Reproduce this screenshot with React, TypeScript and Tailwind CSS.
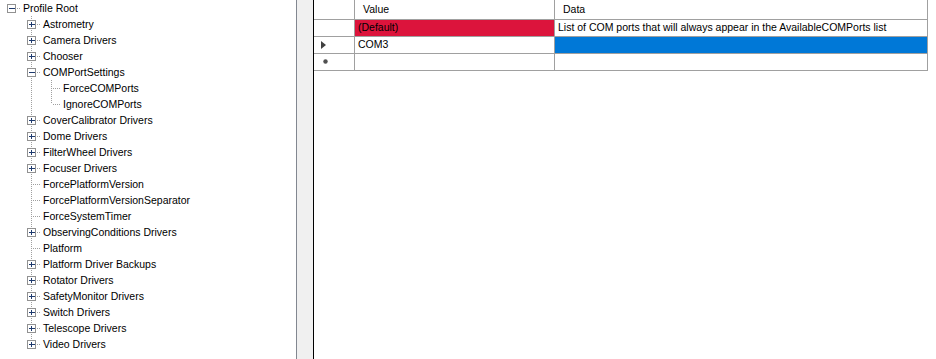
type TreeNode = {
  label: string;
  children?: TreeNode[];
  expanded?: boolean;
};

const tree: TreeNode = {
  label: "Profile Root",
  expanded: true,
  children: [
    { label: "Astrometry", children: [] },
    { label: "Camera Drivers", children: [] },
    { label: "Chooser", children: [] },
    {
      label: "COMPortSettings",
      expanded: true,
      children: [{ label: "ForceCOMPorts" }, { label: "IgnoreCOMPorts" }],
    },
    { label: "CoverCalibrator Drivers", children: [] },
    { label: "Dome Drivers", children: [] },
    { label: "FilterWheel Drivers", children: [] },
    { label: "Focuser Drivers", children: [] },
    { label: "ForcePlatformVersion" },
    { label: "ForcePlatformVersionSeparator" },
    { label: "ForceSystemTimer" },
    { label: "ObservingConditions Drivers", children: [] },
    { label: "Platform" },
    { label: "Platform Driver Backups", children: [] },
    { label: "Rotator Drivers", children: [] },
    { label: "SafetyMonitor Drivers", children: [] },
    { label: "Switch Drivers", children: [] },
    { label: "Telescope Drivers", children: [] },
    { label: "Video Drivers", children: [] },
  ],
};

type Row = {
  label: string;
  level: number;
  hasChildren: boolean;
  expanded: boolean;
  isLast: boolean;
  ancestorsMore: boolean[];
};

function flatten(node: TreeNode, level: number, isLast: boolean, ancestorsMore: boolean[], out: Row[]) {
  const hasChildren = node.children !== undefined;
  out.push({ label: node.label, level, hasChildren, expanded: !!node.expanded, isLast, ancestorsMore });
  if (node.expanded && node.children) {
    node.children.forEach((c, i) =>
      flatten(c, level + 1, i === node.children!.length - 1, [...ancestorsMore, !isLast], out)
    );
  }
}

const rows: Row[] = [];
flatten(tree, 0, true, [], rows);

const LINE = "#a0a0a0";

function Connector({ row }: { row: Row }) {
  const w = 20 * row.level + 21;
  const cx = 11 + 20 * row.level + 0.5;
  return (
    <svg width={w} height={16} className="shrink-0" shapeRendering="crispEdges">
      {row.ancestorsMore.map((more, a) =>
        a >= 1 && more ? (
          <line key={a} x1={11 + 20 * a + 0.5} y1={0} x2={11 + 20 * a + 0.5} y2={16} stroke={LINE} strokeDasharray="1 1" />
        ) : null
      )}
      {row.level >= 1 && (
        <line x1={cx} y1={0} x2={cx} y2={row.isLast ? 8 : 16} stroke={LINE} strokeDasharray="1 1" />
      )}
      <line x1={cx + 1} y1={8.5} x2={w} y2={8.5} stroke={LINE} strokeDasharray="1 1" />
      {row.hasChildren && (
        <g>
          <rect x={cx - 4} y={4.5} width={8} height={8} fill="#ffffff" stroke="#919191" />
          <line x1={cx - 2.5} y1={8.5} x2={cx + 3} y2={8.5} stroke="#1e3a6e" />
          {!row.expanded && <line x1={cx} y1={6} x2={cx} y2={11} stroke="#1e3a6e" />}
        </g>
      )}
    </svg>
  );
}

function TreePanel() {
  return (
    <div className="w-[297px] h-full bg-white border-r border-[#828790] shrink-0 overflow-hidden">
      {rows.map((r) => (
        <div key={r.label} className="flex items-center h-[16px]">
          <Connector row={r} />
          <span className="ml-[2px] text-black whitespace-nowrap leading-none">{r.label}</span>
        </div>
      ))}
    </div>
  );
}

function RowHeaderGlyph({ kind }: { kind: "current" | "new" | "none" }) {
  if (kind === "current")
    return (
      <svg width={6} height={8} className="ml-[7px]">
        <path d="M0 0 L5 4 L0 8 Z" fill="#404040" />
      </svg>
    );
  if (kind === "new")
    return (
      <svg width={6} height={6} className="ml-[9px]">
        <circle cx={2.5} cy={2.5} r={2.2} fill="#505050" />
      </svg>
    );
  return null;
}

function DataGrid() {
  const cell = "border-r border-b border-[#a0a0a0] flex items-center px-[3px] whitespace-nowrap";
  const body = [
    { glyph: "none" as const, value: "(Default)", data: "List of COM ports that will always appear in the AvailableCOMPorts list", valueCls: "bg-[#dc143c]", dataCls: "" },
    { glyph: "current" as const, value: "COM3", data: "", valueCls: "", dataCls: "bg-[#0078d7]" },
    { glyph: "new" as const, value: "", data: "", valueCls: "", dataCls: "" },
  ];
  return (
    <div className="flex-1 h-full bg-white border-l border-black">
      <div className="flex h-[20px]">
        <div className="w-[41px] border-r border-b border-[#a0a0a0]" />
        <div className={`${cell} w-[200px] pl-[8px]`}>Value</div>
        <div className={`${cell} w-[373px] pl-[8px]`}>Data</div>
      </div>
      {body.map((r, i) => (
        <div key={i} className="flex h-[17px]">
          <div className="w-[41px] border-r border-b border-[#a0a0a0] flex items-center">
            <RowHeaderGlyph kind={r.glyph} />
          </div>
          <div className={`${cell} w-[200px] ${r.valueCls}`}>{r.value}</div>
          <div className={`${cell} w-[373px] ${r.dataCls}`}>{r.data}</div>
        </div>
      ))}
    </div>
  );
}

export default function App() {
  return (
    <div
      className="flex w-[936px] h-[359px] bg-white text-[10.5px] text-black overflow-hidden"
      style={{ fontFamily: '"Liberation Sans", Arial, sans-serif' }}
    >
      <TreePanel />
      <div className="w-[16px] h-full bg-[#f0f0f0] shrink-0" />
      <DataGrid />
    </div>
  );
}
